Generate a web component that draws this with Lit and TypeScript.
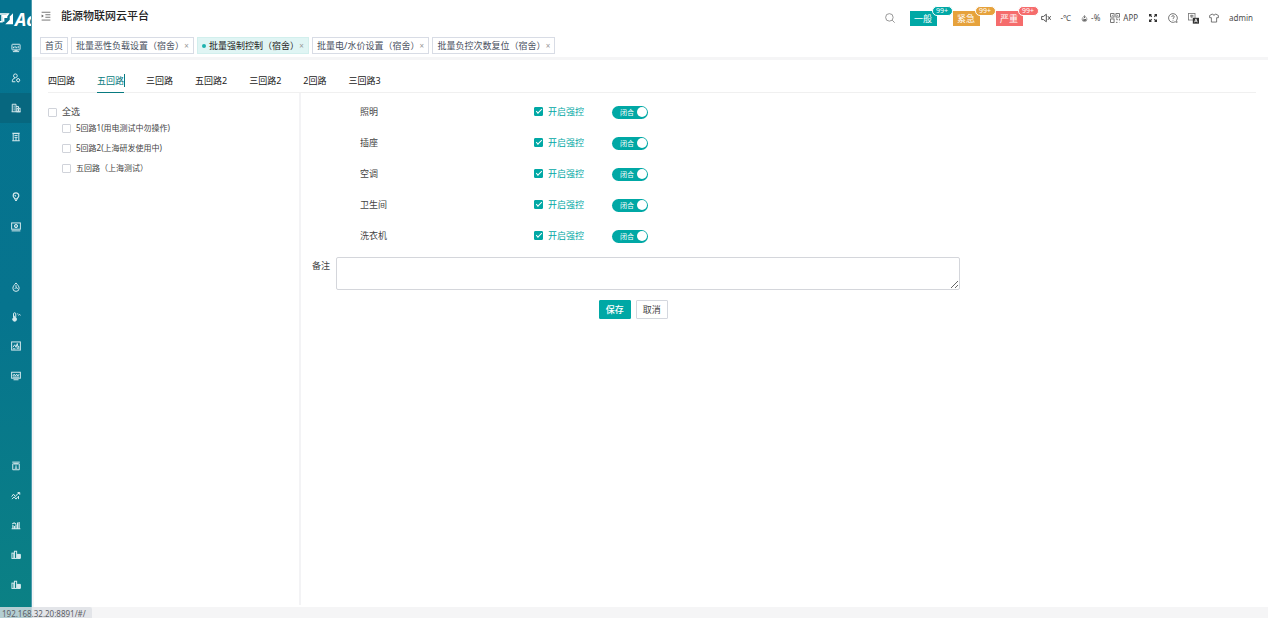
import { LitElement, html, css, svg, nothing } from "lit";
import { customElement, state } from "lit/decorators.js";
import { classMap } from "lit/directives/class-map.js";

const icons: Record<string, unknown> = {
  monitor: svg`<rect x="1.5" y="2" width="13" height="9" rx="1"/><path d="M4 8.5V6M6.500 8.500V4.500M9 8.500V6M11.500 8.500V4.500M3 13.800h10M5.500 12.200h5"/>`,
  user: svg`<circle cx="7" cy="4.500" r="3"/><path d="M2 14c0-4 2-5.500 4.500-6M2 14h5"/><circle cx="11.500" cy="11.500" r="2.500"/><path d="M11.500 8v1M11.500 14v1M8.200 11.500h1"/>`,
  building: svg`<path d="M2 14V2h6v12M1 14h14M8 5.500h4v3M4 5h2M4 8h2M4 11h2"/><rect x="9.500" y="8.500" width="5" height="5.500"/><path d="M12 9.500v4"/>`,
  tower: svg`<path d="M3.500 14V2.500h9V14M2 14h12M2 2h12M5.500 5.500h5M8 8v6M5.500 8.500h5"/>`,
  bulb: svg`<path d="M6 11c0-1.500-2.500-2.500-2.500-5a4.500 4.500 0 0 1 9 0c0 2.500-2.500 3.500-2.500 5zM6.500 13.500h3M6 5l2 2" stroke-width="1.900"/>`,
  camera: svg`<rect x="1" y="1.500" width="14" height="10"/><circle cx="8" cy="6.500" r="2.600"/><circle cx="8" cy="6.500" r=".6"/><path d="M1 14.200h14"/>`,
  drop: svg`<path d="M8 1.500C5 5 3 7 3 10a5 5 0 0 0 10 0c0-3-2-5-5-8.500zM8 5v4l-2 2M8 9l3 1.500"/>`,
  thermo: svg`<path d="M4 9V3a1.800 1.800 0 0 1 3.600 0v6"/><circle cx="5.800" cy="11.700" r="3" fill="currentColor"/><path d="M5.800 6v5M10 3h1.500M12 5.500c0-2 3-2 3 0"/>`,
  wave: svg`<rect x="1" y="1.500" width="14" height="13"/><path d="M3 10l3-4 2 4 2-6 1 5h2M10 10v3M12.500 9v4M3 12.500h4"/>`,
  screen: svg`<rect x="1" y="2" width="14" height="9.500"/><path d="M3 8l2-3 2 3 2-3 2 3 2-3M3 9.700h10M4 14h8"/>`,
  meter: svg`<path d="M2 1.800h12M2.800 4.500v9.500h10.400V4.500zM5 4.500h6"/><path d="M8 7v4M6 11.500h4"/>`,
  trend: svg`<path d="M1 9l3-4 3 4 3-4 4-2M1.500 13l3.500-3.500 3 3.500 3-4M10.500 2.500H14V6M12 8v5"/>`,
  bars: svg`<path d="M1 14h14M3 13V8M5.500 13V9.500M8 13V7M10.500 13V4M13 13V3M2 6.500l3-2 3 2" stroke-width="1.800"/>`,
  columns: svg`<rect x="1.500" y="5" width="3" height="8.500"/><rect x="5.500" y="2" width="3.500" height="11.500"/><path d="M11 6.500v7M13 7.500v6M10 13.500h5"/><path d="M10 7h5v6h-5z" fill="currentColor"/>`,
  search: svg`<circle cx="7" cy="7" r="6"/><path d="M11.500 11.500L15.500 15.500"/>`,
  mute: svg`<path d="M1 5.500h3L8.500 2v12L4 10.500H1zM11 5l4.500 6M15.500 5l-4.500 6" stroke-width="1.500"/>`,
  humid: svg`<path d="M8 1C5 5 2.500 7 2.500 10a5.500 5 0 0 0 11 0C13.500 7 11 5 8 1z"/><path d="M4 10c2-1.500 3 1.500 8 0M5 12.500h6" stroke-width="2"/><path d="M8 3v4" stroke-width="2"/>`,
  qr: svg`<rect x="1" y="1" width="5.500" height="5.500"/><rect x="9.500" y="1" width="5.500" height="5.500"/><rect x="1" y="9.500" width="5.500" height="5.500"/><path d="M9.500 9.500h2v2M15 9v3M9.500 15h2.500M14.500 15h.5M3 3.800h1.500M11.500 3.800H13"/>`,
  expand: svg`<path d="M3 3l3 3M13 3l-3 3M3 13l3-3M13 13l-3-3M2.500 5.500v-3h3M10.500 2.500h3v3M2.500 10.500v3h3M13.500 10.500v3h-3" stroke-width="1.800"/>`,
  help: svg`<path d="M8 1a7 7 0 1 0 3.500 13L14.500 15l-.8-3A7 7 0 0 0 8 1z"/><path d="M6 6.200C6 3.500 10 3.500 10 6.200c0 1.600-2 1.600-2 3.300M8 11v1.200"/>`,
  translate: svg`<rect x=".8" y=".8" width="9.400" height="9.400" stroke="#777"/><path d="M3 3.500h5M5.500 2.500v5M3 5.500h5" stroke="#777"/><rect x="7" y="7" width="9" height="8.500" fill="currentColor" stroke="none"/><path d="M9.500 13.500l2-5 2 5M10.300 12h2.500" stroke="#fff"/>`,
  shirt: svg`<path d="M5.500 1.500L1 4v3.500h2.800v7h8.400v-7H15V4l-4.500-2.500C10 4 6 4 5.500 1.500z"/>`,
  fold: svg`<path d="M1 2h14M7 6h8M7 10h8M1 14.500h14" stroke-width="1.400"/><path d="M1 5.500L4.500 8 1 10.500z" fill="currentColor" stroke="none"/>`,
  mark: svg`<path d="M0 2.500h10L8.500 4.500H2.500V12H0M4.500 12V6.500H9" stroke-width="1.800"/><path d="M16 1.500V15H6.500L12 9.500V5.500z" fill="currentColor" stroke="none"/>`,
};

const icon = (name: string) =>
  html`<svg class="icon" viewBox="0 0 16 16" aria-hidden="true">${icons[name]}</svg>`;

const menu = [
  "monitor", "user", "building", "tower", "", "bulb", "camera", "", "drop", "thermo",
  "wave", "screen", "", "", "meter", "trend", "bars", "columns", "columns",
];
const alarms = [
  { text: "一般", kind: "normal" },
  { text: "紧急", kind: "urgent" },
  { text: "严重", kind: "severe" },
];
const pages = ["首页", "批量恶性负载设置（宿舍）", "批量强制控制（宿舍）", "批量电/水价设置（宿舍）", "批量负控次数复位（宿舍）"];
const groups = ["四回路", "五回路", "三回路", "五回路2", "三回路2", "2回路", "三回路3"];
const devices = ["5回路1(用电测试中勿操作)", "5回路2(上海研发使用中)", "五回路（上海测试）"];
const circuits = ["照明", "插座", "空调", "卫生间", "洗衣机"];

@customElement("app-root")
export class AppRoot extends LitElement {
  @state() private page = 2;
  @state() private group = 1;

  static styles = css`
    :host {
      display: grid;
      grid-template-columns: 32px minmax(0, 1fr);
      height: 100vh;
      overflow: hidden;
      position: relative;
      background: #f5f5f6;
      color: #444;
      font: 9px/16px "Noto Sans", "Noto Sans CJK SC", sans-serif;
    }
    * { box-sizing: border-box; }
    button, textarea { font: inherit; color: inherit; }
    button { padding: 0; margin: 0; border: 0; background: none; cursor: pointer; white-space: nowrap; }
    a { color: inherit; text-decoration: none; }
    ul { list-style: none; margin: 0; padding: 0; }
    .icon { display: block; width: 10px; height: 10px; flex: none; fill: none; stroke: currentColor; stroke-width: 1.2; }

    .side {
      display: flex;
      flex-direction: column;
      min-height: 0;
      padding-bottom: 18px;
      background: linear-gradient(#05738f, #06748e 50%, #0b8184);
      border-right: 1px solid #4b9bad;
      color: #d5e9ed;
    }
    .logo { display: flex; align-items: center; gap: 2px; height: 33px; padding-top: 4px; overflow: hidden; color: #fff; font: italic bold 18px/20px "Open Sans", sans-serif; }
    .logo .icon { width: 13px; height: 13px; }
    .menu { flex: 1; display: flex; flex-direction: column; }
    .menu li { flex: 1; display: flex; }
    .menu a { flex: 1; display: flex; align-items: center; justify-content: center; }
    .menu .icon { stroke-width: 1.6; }
    .menu a.on { background: #07677f; }

    .body { display: flex; flex-direction: column; min-width: 0; }
    .head { background: #fff; height: 57px; }
    .bar { display: flex; align-items: center; height: 33px; padding: 0 15px 0 9px; color: #4c4c4c; }
    .fold { color: #666; }
    .title { margin: 0 auto 0 10px; font-size: 11px; line-height: 16px; font-weight: 500; color: #222; }
    .title-row { display: flex; align-items: center; flex: 1; padding-bottom: 2px; }
    .tools { display: flex; align-items: center; padding-top: 3px; }
    .tools button { display: flex; align-items: center; gap: 3px; }
    .find { margin-right: 15px; color: #777; }
    .alarms { display: flex; gap: 16px; margin-right: 18px; }
    .alarms .alarm { position: relative; justify-content: center; width: 27px; height: 15px; color: #fff; line-height: 15px; }
    .badge { position: absolute; left: 22px; top: -5px; width: 21px; height: 10px; border: 1px solid #fff; border-radius: 5px; font-size: 7px; line-height: 8px; text-align: center; }
    .normal, .normal .badge { background: #00a8a5; }
    .urgent, .urgent .badge { background: #e6a23c; }
    .severe, .severe .badge { background: #f56c6c; }
    .extra { display: flex; align-items: center; gap: 10px; font-size: 8px; }
    .extra .dark { color: #333; }
    .extra .tiny .icon { width: 7px; height: 9px; }
    .extra .wide .icon { width: 11px; height: 11px; }

    .pages { display: flex; gap: 3px; padding: 4px 8px 0; }
    .page { display: flex; align-items: center; height: 17px; border: 1px solid #d8dce5; padding: 0 4px; color: #495060; background: #fff; }
    .page.on { background: #e0f5f4; border-color: #d2efed; color: #222; }
    .page.on .name::before { content: ""; display: inline-block; width: 4px; height: 4px; margin-right: 3px; border-radius: 50%; background: #1eb2ae; vertical-align: 1px; }
    .shut { width: 5px; font-size: 8px; color: #999; }

    .main { flex: 1; min-height: 0; display: flex; flex-direction: column; margin: 3px 0 11px 2px; padding: 0 12px 2px 14px; background: #fff; }
    .groups { display: flex; gap: 22px; height: 33px; padding-top: 9px; border-bottom: 1px solid #f0f0f0; }
    .group { height: 24px; line-height: 24px; color: #222; border-bottom: 1px solid transparent; }
    .group.on { color: #087a80; border-color: #087a80; }
    .group.on .caret { box-shadow: 1px 0 #087a80; }
    .panes { flex: 1; min-height: 0; display: grid; grid-template-columns: 253px minmax(0, 1fr); }
    .tree { border-right: 2px solid #f3f3f5; padding-top: 11px; }
    .tree label, .force { display: flex; align-items: center; gap: 5px; }
    .tree ul { padding-left: 14px; font-size: 8px; }
    .tree li { height: 20px; }

    .box { appearance: none; flex: none; display: grid; place-items: center; width: 9px; height: 9px; margin: 0; border: 1px solid #d0d3da; border-radius: 1px; background: #fff; }
    .box:checked { background: #00a8a5; border-color: #00a8a5; }
    .box:checked::after { content: ""; width: 5px; height: 2px; margin-bottom: 2px; border: solid #fff; border-width: 0 0 1px 1px; transform: rotate(-45deg); }

    .form { width: 70%; padding: 3px 10px 0 11px; }
    .row { display: grid; grid-template-columns: 174px 78px auto; align-items: center; height: 31px; padding-left: 48px; }
    .force { color: #00a8a5; }
    .switch { display: grid; width: 36px; height: 13px; margin-top: 1px; }
    .switch input, .switch span { grid-area: 1 / 1; }
    .switch input { appearance: none; margin: 0; display: flex; align-items: center; padding: 0 1px; border-radius: 7px; background: #bbb; }
    .switch input::after { content: ""; width: 10px; height: 10px; border-radius: 50%; background: #fff; }
    .switch input:checked { background: #00a8a5; justify-content: flex-end; }
    .switch span { z-index: 1; padding-left: 8px; font-size: 7px; line-height: 13px; color: #fff; pointer-events: none; }
    .note { display: grid; grid-template-columns: 24px minmax(0, 1fr); padding-top: 6px; }
    .note label { line-height: 18px; }
    .note textarea { display: block; height: 33px; border: 1px solid #d4d6db; border-radius: 2px; resize: vertical; outline: 0; }
    .acts { display: flex; justify-content: center; gap: 5px; padding: 10px 5px 0 0; }
    .act { width: 32px; height: 19px; border: 1px solid #d4d7de; border-radius: 1px; }
    .act.save { background: #00a8a5; border-color: #00a8a5; color: #fff; font-weight: 500; }

    .status { position: absolute; left: 0; bottom: 0; width: 92px; height: 11px; padding-left: 2px; border-radius: 0 2px 0 0; background: rgba(222, 225, 230, 0.8); color: #5c6066; font-size: 8px; line-height: 13px; overflow: hidden; }
  `;

  render() {
    return html`
      <nav class="side">
        <div class="logo">${icon("mark")}<span>Ac</span></div>
        <ul class="menu">
          ${menu.map((m, i) => html`<li>${m ? html`<a href="#/" aria-label=${m} class=${classMap({ on: i === 2 })}>${icon(m)}</a>` : nothing}</li>`)}
        </ul>
      </nav>
      <div class="body">
        <header class="head">
          <div class="bar">
            <div class="title-row">
              <button class="fold" aria-label="fold">${icon("fold")}</button>
              <h1 class="title">能源物联网云平台</h1>
            </div>
            <div class="tools">
              <button class="find" aria-label="search">${icon("search")}</button>
              <div class="alarms">
                ${alarms.map((a) => html`<button class="alarm ${a.kind}">${a.text}<span class="badge">99+</span></button>`)}
              </div>
              <div class="extra">
                <button aria-label="mute">${icon("mute")}</button>
                <span>-℃</span>
                <button class="tiny">${icon("humid")}-%</button>
                <button>${icon("qr")}APP</button>
                <button class="dark" aria-label="fullscreen">${icon("expand")}</button>
                <button aria-label="help">${icon("help")}</button>
                <button class="dark wide" aria-label="language">${icon("translate")}</button>
                <button aria-label="theme">${icon("shirt")}</button>
                <button>admin</button>
              </div>
            </div>
          </div>
          <div class="pages">
            ${pages.map((p, i) => html`
              <div class=${classMap({ page: true, on: i === this.page })}>
                <button class="name" @click=${() => (this.page = i)}>${p}</button>
                ${i ? html`<button class="shut" aria-label="close">×</button>` : nothing}
              </div>`)}
          </div>
        </header>
        <main class="main">
          <div class="groups" role="tablist">
            ${groups.map((g, i) => html`<button role="tab" class=${classMap({ group: true, on: i === this.group })} @click=${() => (this.group = i)}><span class="caret">${g}</span></button>`)}
          </div>
          <div class="panes">
            <div class="tree">
              <label><input class="box" type="checkbox" />全选</label>
              <ul>
                ${devices.map((d) => html`<li><label><input class="box" type="checkbox" />${d}</label></li>`)}
              </ul>
            </div>
            <form class="form">
              ${circuits.map((c) => html`
                <div class="row">
                  <span>${c}</span>
                  <label class="force"><input class="box" type="checkbox" checked />开启强控</label>
                  <label class="switch"><input type="checkbox" role="switch" checked /><span>闭合</span></label>
                </div>`)}
              <div class="note">
                <label for="note">备注</label>
                <textarea id="note"></textarea>
              </div>
              <div class="acts">
                <button type="button" class="act save">保存</button>
                <button type="button" class="act">取消</button>
              </div>
            </form>
          </div>
        </main>
      </div>
      <div class="status">192.168.32.20:8891/#/</div>
    `;
  }
}
